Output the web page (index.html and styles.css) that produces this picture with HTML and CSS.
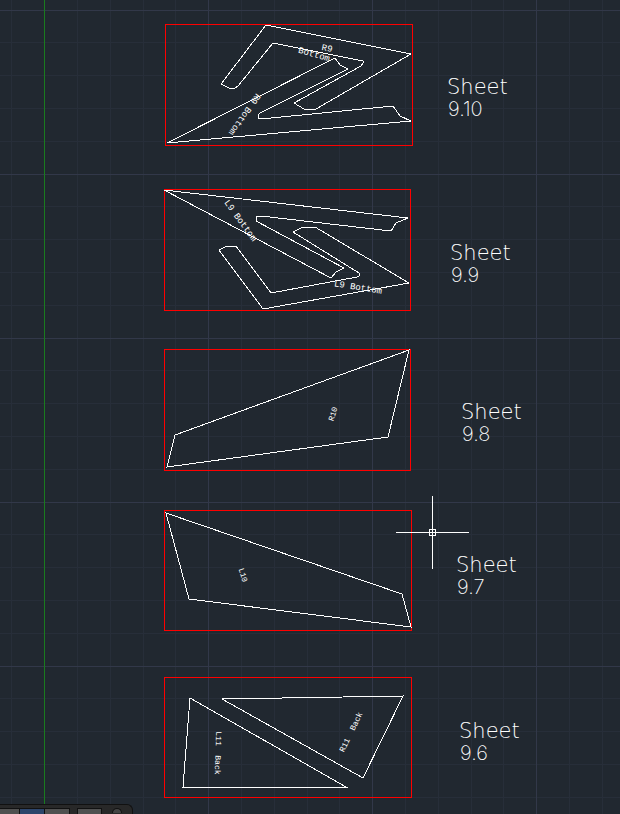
FILE: index.html
```html
<!DOCTYPE html>
<html lang="en">
<head>
<meta charset="utf-8">
<title>Sheet layout</title>
<link rel="stylesheet" href="styles.css">
</head>
<body>
<main class="workspace">
<svg class="drawing" role="img" aria-label="Cut sheets 9.6 to 9.10">
  <defs>
    <pattern id="grid" x="44" y="10" width="164" height="164" patternUnits="userSpaceOnUse">
      <path class="minor" d="M33.5 0V164M66.5 0V164M99.5 0V164M131.5 0V164M0 32.5H164M0 65.5H164M0 98.5H164M0 131.5H164"/>
      <path class="major" d="M.5 0V164M0 .5H164"/>
    </pattern>
  </defs>
  <rect width="100%" height="100%" fill="url(#grid)"/>
  <rect class="axis" x="44" y="0" width="1" height="100%"/>

  <g class="frames">
    <rect x="165.5" y="24.5" width="247" height="121"/>
    <rect x="164.5" y="189.5" width="246" height="121"/>
    <rect x="164.5" y="349.5" width="246" height="121"/>
    <rect x="164.5" y="510.5" width="247" height="120"/>
    <rect x="164.5" y="677.5" width="247" height="120"/>
  </g>

  <g class="parts">
    <path d="M266 25L411 54L316 109H304L294 103L361 66L363 63V61L358 60L273 43L238 86L235 88H229L221 84Z"/>
    <path d="M167 143L335 58L340 65L348 69L260 113L258 115V118L261 119L393 106L400 116L411 121Z"/>
    <path d="M164 190L408 218L396 223L391 231L261 216H256V221L344 268L336 272L331 278Z"/>
    <path d="M263 309L409 283L315 227H303L293 232L359 273V276L357 277L271 293L236 246H227L219 250Z"/>
    <path d="M409 350L388 437L167 467L175 435Z"/>
    <path d="M166 513L402 594L411 627L189 599Z"/>
    <path d="M190 698L346 787H183Z"/>
    <path d="M222 699L403 696L363 778Z"/>
  </g>

  <g class="part-labels">
    <text transform="translate(327 49) rotate(10)">R9</text>
    <text transform="translate(314 55) rotate(16)">Bottom</text>
    <text transform="translate(244 114) rotate(125)">R9 Bottom</text>
    <text transform="translate(240 221) rotate(54)">L9 Bottom</text>
    <text transform="translate(358 288) rotate(9)">L9 Bottom</text>
    <text class="small" transform="translate(333 414) rotate(-72)">R10</text>
    <text class="small" transform="translate(243 575) rotate(72)">L10</text>
    <text class="small" transform="translate(218 753) rotate(92)">L11&#160; Back</text>
    <text class="small" transform="translate(351 732) rotate(-64)">R11&#160; Back</text>
  </g>

  <g class="sheet-names">
    <text x="447" y="94">Sheet</text><text class="number" x="448" y="116">9.10</text>
    <text x="450" y="260">Sheet</text><text class="number" x="451" y="282">9.9</text>
    <text x="461" y="419">Sheet</text><text class="number" x="462" y="441">9.8</text>
    <text x="456" y="572">Sheet</text><text class="number" x="457" y="594">9.7</text>
    <text x="459" y="738">Sheet</text><text class="number" x="460" y="760">9.6</text>
  </g>

  <path class="crosshair" d="M396 532.5H469M432.5 496V569M429.5 529.5H435.5V535.5H429.5Z"/>
</svg>
<div class="toolbar" role="toolbar" aria-label="View tools">
  <button class="tool first" aria-label="Model"></button>
  <button class="tool active" aria-label="Grid"></button>
  <button class="tool" aria-label="Snap"></button>
  <button class="tool apart" aria-label="Scale"></button>
  <button class="knob" aria-label="Settings"></button>
</div>
</main>
</body>
</html>
```
FILE: styles.css
```css
body {
  margin: 0;
  background: #212830;
}

.workspace {
  position: relative;
  height: 100vh;
  overflow: hidden;
}

.drawing {
  display: block;
  width: 100%;
  height: 100%;
}

.minor,
.major,
.frames,
.parts,
.crosshair {
  fill: none;
  shape-rendering: crispEdges;
}

.minor { stroke: #272e39; }
.major { stroke: #323849; }
.axis { fill: #1a7b1e; }
.frames { stroke: #ff0000; }
.parts,
.crosshair { stroke: #ffffff; }

.part-labels {
  fill: #ffffff;
  font: 9px "Liberation Mono", monospace;
  text-anchor: middle;
  dominant-baseline: central;
}

.part-labels .small {
  font-size: 8px;
}

.sheet-names {
  fill: #ffffff;
  font: 200 21px "DejaVu Sans Light", "DejaVu Sans", sans-serif;
}

.sheet-names .number {
  font: 200 20px Inter, Roboto, sans-serif;
}

.toolbar {
  position: absolute;
  left: 0;
  bottom: 0;
  display: flex;
  align-items: flex-start;
  height: 6px;
  padding: 3px 10px 0 0;
  background: #282828;
  border-top: 1px solid #111111;
  border-right: 1px solid #111111;
  border-radius: 0 6px 0 0;
}

.tool {
  width: 25px;
  height: 6px;
  padding: 0;
  border: 1px solid #111111;
  border-bottom: 0;
  border-left: 0;
  background: #505050;
}

.tool.first { width: 20px; }
.tool.active { background: #2d456b; }

.tool.apart {
  margin-left: 7px;
  border-left: 1px solid #111111;
}

.knob {
  width: 10px;
  height: 5px;
  margin-left: 10px;
  padding: 0;
  border: 1px solid #111111;
  border-bottom: 0;
  border-radius: 5px 5px 0 0;
  background: #444444;
}
```
